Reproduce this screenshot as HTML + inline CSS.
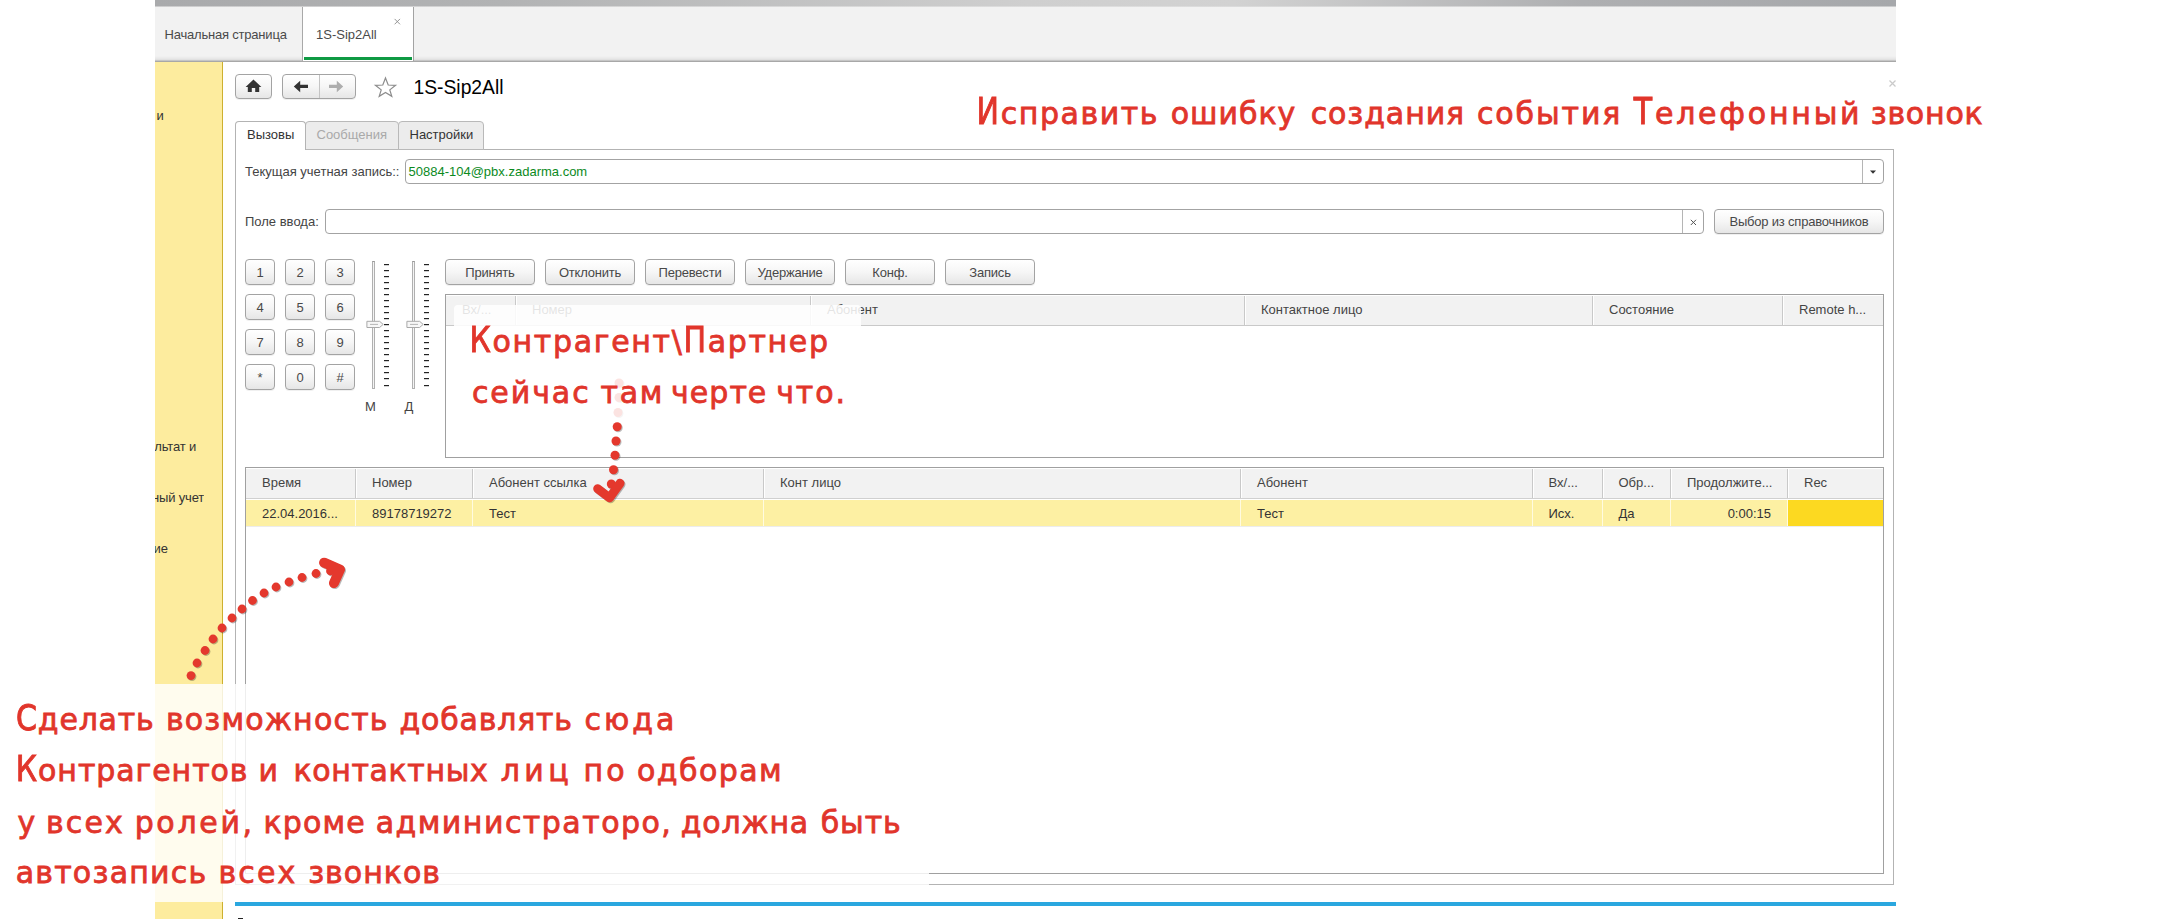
<!DOCTYPE html>
<html lang="ru"><head><meta charset="utf-8"><title>1S-Sip2All</title>
<style>
html,body{margin:0;padding:0;background:#fff;}
body{width:2183px;height:919px;overflow:hidden;position:relative;font-family:"Liberation Sans",sans-serif;font-size:13px;color:#444;}
.a{position:absolute;}
.t{position:absolute;white-space:nowrap;line-height:16px;font-size:13px;}
.btn{position:absolute;box-sizing:border-box;border:1px solid #a3a3a3;border-radius:4px;background:linear-gradient(#ffffff 0%,#f6f6f6 50%,#e6e6e6 100%);text-align:center;line-height:16px;font-size:13px;color:#484848;letter-spacing:-0.2px;box-shadow:0 1px 0 rgba(0,0,0,.06);}
.btn span{position:relative;display:block;}
.inp{position:absolute;box-sizing:border-box;border:1px solid #a3a3a3;border-radius:4px;background:#fff;}
.tbl{position:absolute;box-sizing:border-box;border:1px solid #a0a0a0;background:#fff;}
.hd{position:absolute;background:#f2f2f2;}
.vd{position:absolute;width:1px;background:#c9c9c9;box-shadow:1px 0 0 #fff;}
.red{position:absolute;white-space:nowrap;font-family:"DejaVu Sans","Liberation Sans",sans-serif;color:#e1352b;-webkit-text-stroke:0.8px #e1352b;font-size:30px;line-height:40px;}
.c{display:inline-block;transform:scaleY(1.2);transform-origin:50% 30.4px;}
.c2{transform:scaleY(1.25);}
</style></head><body>

<div class="a" style="left:155px;top:0;width:1741px;height:919px;background:#fff;"></div>
<div class="a" style="left:155px;top:0;width:1741px;height:7px;background:linear-gradient(90deg,#a9aaac 0%,#b2b3b4 20%,#cfcfcf 50%,#d2d2d2 62%,#aeafb1 82%,#a6a8ab 100%);"></div>
<div class="a" style="left:155px;top:6px;width:1741px;height:1px;background:linear-gradient(90deg,#cdcdce,#dedede 55%,#cacbcc);"></div>
<div class="a" style="left:155px;top:7px;width:1741px;height:53px;background:linear-gradient(#f2f2f2 0,#f2f2f2 49px,#e6e6e6 52px,#dcdcdc 53px);"></div>
<div class="a" style="left:155px;top:60px;width:1741px;height:2px;background:linear-gradient(#c6c6c6 0,#c6c6c6 50%,#a8a8a8 50%,#a8a8a8 100%);"></div>
<div class="a" style="left:302px;top:7px;width:112px;height:54px;background:#fff;border-left:1px solid #a9a9a9;border-right:1px solid #a3a3a3;box-sizing:border-box;"></div>
<div class="a" style="left:304px;top:57px;width:108px;height:3px;background:#0e9a43;"></div>
<div class="t" style="left:164.5px;top:27px;color:#4a4a4a;letter-spacing:-0.2px;">Начальная страница</div>
<div class="t" style="left:316px;top:27px;color:#4a4a4a;">1S-Sip2All</div>
<svg class="a" style="left:393px;top:17px" width="9" height="9" viewBox="0 0 9 9"><path d="M1.6 1.9 L7 7.3 M7 1.9 L1.6 7.3" stroke="#8a8a8a" stroke-width="0.9" fill="none"/></svg>
<div class="a" style="left:155px;top:62px;width:67px;height:857px;background:#fdec9e;"></div>
<div class="a" style="left:222px;top:62px;width:1px;height:857px;background:#cdb02f;"></div>
<div class="a" style="left:155px;top:107.5px;width:8.5px;height:16px;overflow:hidden;"><div class="t" style="right:0;top:0;color:#333;letter-spacing:-0.15px;">и</div></div>
<div class="a" style="left:155px;top:439.0px;width:41.19999999999999px;height:16px;overflow:hidden;"><div class="t" style="right:0;top:0;color:#333;letter-spacing:-0.15px;">ультат и</div></div>
<div class="a" style="left:155px;top:490.0px;width:49.19999999999999px;height:16px;overflow:hidden;"><div class="t" style="right:0;top:0;color:#333;letter-spacing:-0.15px;">нный учет</div></div>
<div class="a" style="left:155px;top:541.0px;width:12.800000000000011px;height:16px;overflow:hidden;"><div class="t" style="right:0;top:0;color:#333;letter-spacing:-0.15px;">ние</div></div>
<div class="btn" style="left:235px;top:74px;width:37px;height:25px;"></div>
<svg class="a" style="left:244px;top:78px" width="19" height="16" viewBox="244 78 19 16"><path d="M253.5 79.6 L261.4 87.1 L259.2 87.1 L259.2 92.1 L255.2 92.1 L255.2 88.1 L251.8 88.1 L251.8 92.1 L247.8 92.1 L247.8 87.1 L245.6 87.1 Z" fill="#333"/></svg>
<div class="btn" style="left:282px;top:74px;width:74px;height:25px;"></div>
<div class="a" style="left:319px;top:75px;width:1px;height:23px;background:#c4c4c4;"></div>
<svg class="a" style="left:290px;top:78px" width="58" height="17" viewBox="290 78 58 17"><path d="M293.8 86.4 L300.2 80.8 L300.2 84.8 L308 84.8 L308 88 L300.2 88 L300.2 92.2 Z" fill="#333"/><path d="M343.2 86.4 L336.8 80.8 L336.8 84.8 L329 84.8 L329 88 L336.8 88 L336.8 92.2 Z" fill="#adadad"/></svg>
<svg class="a" style="left:372px;top:75px" width="27" height="25" viewBox="372 75 27 25"><path d="M385.5 78 L388.2 85 L395.6 85.3 L389.8 89.9 L391.8 96.3 L385.5 92.5 L379.2 96.3 L381.2 89.9 L375.4 85.3 L382.8 85 Z" fill="#fff" stroke="#8c8c8c" stroke-width="1.2" stroke-linejoin="miter"/></svg>
<div class="t" style="left:413.5px;top:76px;font-size:19.3px;line-height:24px;color:#000;">1S-Sip2All</div>
<svg class="a" style="left:1888px;top:79px" width="9" height="9" viewBox="0 0 9 9"><path d="M1.5 1.5 L7.5 7.5 M7.5 1.5 L1.5 7.5" stroke="#cacaca" stroke-width="1.3" fill="none"/></svg>
<div class="a" style="left:235px;top:149px;width:1659px;height:736px;box-sizing:border-box;border:1px solid #b3b3b3;background:#fff;"></div>
<div class="a" style="left:305px;top:121px;width:94px;height:29px;box-sizing:border-box;border:1px solid #b9b9b9;border-radius:4px 4px 0 0;background:#ececec;"></div>
<div class="a" style="left:398px;top:121px;width:86px;height:29px;box-sizing:border-box;border:1px solid #b9b9b9;border-radius:4px 4px 0 0;background:#ececec;"></div>
<div class="a" style="left:235px;top:121px;width:71px;height:29px;box-sizing:border-box;border:1px solid #b3b3b3;border-bottom:none;border-radius:4px 4px 0 0;background:#fff;"></div><div class="a" style="left:236px;top:149px;width:69px;height:1px;background:#fff;"></div>
<div class="t" style="left:247px;top:127px;color:#333;">Вызовы</div>
<div class="t" style="left:316.5px;top:127px;color:#a9a9a9;">Сообщения</div>
<div class="t" style="left:409.5px;top:127px;color:#333;">Настройки</div>
<div class="t" style="left:245px;top:163.7px;">Текущая учетная запись::</div>
<div class="inp" style="left:405px;top:159px;width:1479px;height:25px;"></div>
<div class="a" style="left:1862px;top:160px;width:1px;height:23px;background:#b5b5b5;"></div>
<svg class="a" style="left:1868px;top:168px" width="10" height="8" viewBox="0 0 10 8"><path d="M2 2.6 L8 2.6 L5 5.8 Z" fill="#333"/></svg>
<div class="t" style="left:408.5px;top:163.7px;color:#0b8a1d;">50884-104@pbx.zadarma.com</div>
<div class="t" style="left:245px;top:213.7px;">Поле ввода:</div>
<div class="inp" style="left:325px;top:209px;width:1379px;height:25px;"></div>
<div class="a" style="left:1682px;top:210px;width:1px;height:23px;background:#b5b5b5;"></div>
<svg class="a" style="left:1689px;top:218px" width="9" height="9" viewBox="0 0 9 9"><path d="M1.8 1.8 L7 7 M7 1.8 L1.8 7" stroke="#555" stroke-width="1" fill="none"/></svg>
<div class="btn" style="left:1714px;top:209px;width:170px;height:25px;"><span style="top:3.5px">Выбор из справочников</span></div>
<div class="btn" style="left:245px;top:259px;width:30px;height:26px;"><span style="top:4.5px">1</span></div>
<div class="btn" style="left:285px;top:259px;width:30px;height:26px;"><span style="top:4.5px">2</span></div>
<div class="btn" style="left:325px;top:259px;width:30px;height:26px;"><span style="top:4.5px">3</span></div>
<div class="btn" style="left:245px;top:294px;width:30px;height:26px;"><span style="top:4.5px">4</span></div>
<div class="btn" style="left:285px;top:294px;width:30px;height:26px;"><span style="top:4.5px">5</span></div>
<div class="btn" style="left:325px;top:294px;width:30px;height:26px;"><span style="top:4.5px">6</span></div>
<div class="btn" style="left:245px;top:329px;width:30px;height:26px;"><span style="top:4.5px">7</span></div>
<div class="btn" style="left:285px;top:329px;width:30px;height:26px;"><span style="top:4.5px">8</span></div>
<div class="btn" style="left:325px;top:329px;width:30px;height:26px;"><span style="top:4.5px">9</span></div>
<div class="btn" style="left:245px;top:364px;width:30px;height:26px;"><span style="top:4.5px">*</span></div>
<div class="btn" style="left:285px;top:364px;width:30px;height:26px;"><span style="top:4.5px">0</span></div>
<div class="btn" style="left:325px;top:364px;width:30px;height:26px;"><span style="top:4.5px">#</span></div>
<div class="a" style="left:372px;top:261px;width:3px;height:128px;box-sizing:border-box;border:1px solid #b0b0b0;border-top-color:#9a9a9a;background:#f4f4f4;"></div>
<svg class="a" style="left:383.6px;top:261px" width="6" height="128" viewBox="0 0 6 128"><rect x="0" y="3" width="5" height="1.2" fill="#222"/><rect x="0" y="9" width="5" height="1.2" fill="#222"/><rect x="0" y="15" width="5" height="1.2" fill="#222"/><rect x="0" y="21" width="5" height="1.2" fill="#222"/><rect x="0" y="27" width="5" height="1.2" fill="#222"/><rect x="0" y="33" width="5" height="1.2" fill="#222"/><rect x="0" y="39" width="5" height="1.2" fill="#222"/><rect x="0" y="45" width="5" height="1.2" fill="#222"/><rect x="0" y="51" width="5" height="1.2" fill="#222"/><rect x="0" y="57" width="5" height="1.2" fill="#222"/><rect x="0" y="63" width="5" height="1.2" fill="#222"/><rect x="0" y="69" width="5" height="1.2" fill="#222"/><rect x="0" y="75" width="5" height="1.2" fill="#222"/><rect x="0" y="81" width="5" height="1.2" fill="#222"/><rect x="0" y="87" width="5" height="1.2" fill="#222"/><rect x="0" y="93" width="5" height="1.2" fill="#222"/><rect x="0" y="99" width="5" height="1.2" fill="#222"/><rect x="0" y="105" width="5" height="1.2" fill="#222"/><rect x="0" y="111" width="5" height="1.2" fill="#222"/><rect x="0" y="117" width="5" height="1.2" fill="#222"/><rect x="0" y="124" width="5" height="1.2" fill="#222"/></svg>
<svg class="a" style="left:365.8px;top:320px" width="19" height="9" viewBox="0 0 19 9"><path d="M0.9 1.3 L13.6 1.3 L17.2 4.4 L13.6 7.5 L0.9 7.5 Z" fill="#f7f7f7" stroke="#a9a9a9" stroke-width="1"/><path d="M4 4.4 L12 4.4" stroke="#b5b5b5" stroke-width="1"/></svg>
<div class="a" style="left:412px;top:261px;width:3px;height:128px;box-sizing:border-box;border:1px solid #b0b0b0;border-top-color:#9a9a9a;background:#f4f4f4;"></div>
<svg class="a" style="left:423.6px;top:261px" width="6" height="128" viewBox="0 0 6 128"><rect x="0" y="3" width="5" height="1.2" fill="#222"/><rect x="0" y="9" width="5" height="1.2" fill="#222"/><rect x="0" y="15" width="5" height="1.2" fill="#222"/><rect x="0" y="21" width="5" height="1.2" fill="#222"/><rect x="0" y="27" width="5" height="1.2" fill="#222"/><rect x="0" y="33" width="5" height="1.2" fill="#222"/><rect x="0" y="39" width="5" height="1.2" fill="#222"/><rect x="0" y="45" width="5" height="1.2" fill="#222"/><rect x="0" y="51" width="5" height="1.2" fill="#222"/><rect x="0" y="57" width="5" height="1.2" fill="#222"/><rect x="0" y="63" width="5" height="1.2" fill="#222"/><rect x="0" y="69" width="5" height="1.2" fill="#222"/><rect x="0" y="75" width="5" height="1.2" fill="#222"/><rect x="0" y="81" width="5" height="1.2" fill="#222"/><rect x="0" y="87" width="5" height="1.2" fill="#222"/><rect x="0" y="93" width="5" height="1.2" fill="#222"/><rect x="0" y="99" width="5" height="1.2" fill="#222"/><rect x="0" y="105" width="5" height="1.2" fill="#222"/><rect x="0" y="111" width="5" height="1.2" fill="#222"/><rect x="0" y="117" width="5" height="1.2" fill="#222"/><rect x="0" y="124" width="5" height="1.2" fill="#222"/></svg>
<svg class="a" style="left:405.8px;top:320px" width="19" height="9" viewBox="0 0 19 9"><path d="M0.9 1.3 L13.6 1.3 L17.2 4.4 L13.6 7.5 L0.9 7.5 Z" fill="#f7f7f7" stroke="#a9a9a9" stroke-width="1"/><path d="M4 4.4 L12 4.4" stroke="#b5b5b5" stroke-width="1"/></svg>
<div class="t" style="left:365px;top:399px;">М</div>
<div class="t" style="left:404.5px;top:399px;">Д</div>
<div class="btn" style="left:445px;top:259px;width:90px;height:26px;"><span style="top:4.5px">Принять</span></div>
<div class="btn" style="left:545px;top:259px;width:90px;height:26px;"><span style="top:4.5px">Отклонить</span></div>
<div class="btn" style="left:645px;top:259px;width:90px;height:26px;"><span style="top:4.5px">Перевести</span></div>
<div class="btn" style="left:745px;top:259px;width:90px;height:26px;"><span style="top:4.5px">Удержание</span></div>
<div class="btn" style="left:845px;top:259px;width:90px;height:26px;"><span style="top:4.5px">Конф.</span></div>
<div class="btn" style="left:945px;top:259px;width:90px;height:26px;"><span style="top:4.5px">Запись</span></div>
<div class="tbl" style="left:445px;top:294px;width:1439px;height:164px;"></div>
<div class="hd" style="left:446px;top:296px;width:1437px;height:29px;"></div>
<div class="a" style="left:446px;top:325px;width:1437px;height:1px;background:#c9c9c9;"></div>
<div class="vd" style="left:515px;top:296px;height:29px;"></div>
<div class="vd" style="left:810px;top:296px;height:29px;"></div>
<div class="vd" style="left:1244px;top:296px;height:29px;"></div>
<div class="vd" style="left:1592px;top:296px;height:29px;"></div>
<div class="vd" style="left:1782px;top:296px;height:29px;"></div>
<div class="t" style="left:462px;top:301.6px;">Вх/...</div>
<div class="t" style="left:532px;top:301.6px;">Номер</div>
<div class="t" style="left:827px;top:301.6px;">Абонент</div>
<div class="t" style="left:1261px;top:301.6px;">Контактное лицо</div>
<div class="t" style="left:1609px;top:301.6px;">Состояние</div>
<div class="t" style="left:1799px;top:301.6px;">Remote h...</div>
<div class="tbl" style="left:245px;top:467px;width:1639px;height:407px;"></div>
<div class="hd" style="left:246px;top:469px;width:1637px;height:29px;"></div>
<div class="a" style="left:246px;top:498px;width:1637px;height:1px;background:#d0d0d0;"></div>
<div class="a" style="left:246px;top:500px;width:1637px;height:26px;background:#fdf0a3;"></div>
<div class="a" style="left:246px;top:526px;width:1637px;height:1px;background:#ececec;"></div>
<div class="a" style="left:1788px;top:500px;width:95px;height:26px;background:#fcd921;"></div>
<div class="vd" style="left:355px;top:469px;height:29px;"></div>
<div class="a" style="left:355px;top:500px;width:1px;height:26px;background:#fffbe0;"></div>
<div class="vd" style="left:472px;top:469px;height:29px;"></div>
<div class="a" style="left:472px;top:500px;width:1px;height:26px;background:#fffbe0;"></div>
<div class="vd" style="left:763px;top:469px;height:29px;"></div>
<div class="a" style="left:763px;top:500px;width:1px;height:26px;background:#fffbe0;"></div>
<div class="vd" style="left:1240px;top:469px;height:29px;"></div>
<div class="a" style="left:1240px;top:500px;width:1px;height:26px;background:#fffbe0;"></div>
<div class="vd" style="left:1532px;top:469px;height:29px;"></div>
<div class="a" style="left:1532px;top:500px;width:1px;height:26px;background:#fffbe0;"></div>
<div class="vd" style="left:1602px;top:469px;height:29px;"></div>
<div class="a" style="left:1602px;top:500px;width:1px;height:26px;background:#fffbe0;"></div>
<div class="vd" style="left:1670px;top:469px;height:29px;"></div>
<div class="a" style="left:1670px;top:500px;width:1px;height:26px;background:#fffbe0;"></div>
<div class="vd" style="left:1787px;top:469px;height:29px;"></div>
<div class="a" style="left:1787px;top:500px;width:1px;height:26px;background:#fffbe0;"></div>
<div class="t" style="left:262px;top:474.5px;">Время</div>
<div class="t" style="left:372px;top:474.5px;">Номер</div>
<div class="t" style="left:489px;top:474.5px;">Абонент ссылка</div>
<div class="t" style="left:780px;top:474.5px;">Конт лицо</div>
<div class="t" style="left:1257px;top:474.5px;">Абонент</div>
<div class="t" style="left:1548.5px;top:474.5px;">Вх/...</div>
<div class="t" style="left:1618.5px;top:474.5px;">Обр...</div>
<div class="t" style="left:1687px;top:474.5px;">Продолжите...</div>
<div class="t" style="left:1804px;top:474.5px;">Rec</div>
<div class="t" style="left:262px;top:505.5px;color:#333;">22.04.2016...</div>
<div class="t" style="left:372px;top:505.5px;color:#333;">89178719272</div>
<div class="t" style="left:489px;top:505.5px;color:#333;">Тест</div>
<div class="t" style="left:1257px;top:505.5px;color:#333;">Тест</div>
<div class="t" style="left:1548.5px;top:505.5px;color:#333;">Исх.</div>
<div class="t" style="left:1618.5px;top:505.5px;color:#333;">Да</div>
<div class="t" style="left:1671px;width:100px;text-align:right;top:505.5px;color:#333;">0:00:15</div>
<div class="a" style="left:235px;top:901.5px;width:1661px;height:4.3px;background:#2aa7df;"></div>
<div class="a" style="left:238px;top:918px;width:5px;height:1px;background:#222;"></div>
<svg class="a" style="left:0;top:0;filter:drop-shadow(1px 1.3px 0.6px rgba(0,0,0,.27));" width="2183" height="919" viewBox="0 0 2183 919" fill="#e4382d"><circle cx="619" cy="383" r="4.5"/><circle cx="619" cy="397.5" r="4.5"/><circle cx="618" cy="412.5" r="4.5"/><circle cx="617.2" cy="426.7" r="4.5"/><circle cx="616" cy="441" r="4.5"/><circle cx="615" cy="455.3" r="4.5"/><circle cx="613.5" cy="469.8" r="4.5"/><circle cx="611.3" cy="484" r="4.5"/><path d="M597.7 488.7 L609.5 497.8 L620 483.3" fill="none" stroke="#e4382d" stroke-width="9" stroke-linecap="round" stroke-linejoin="round"/></svg>
<div class="a" style="left:454px;top:305px;width:407px;height:116px;border-radius:4px;background:rgba(255,255,255,.86);"></div>
<div class="a" style="left:0;top:684px;width:929px;height:217.7px;background:rgba(255,255,255,.82);"></div>
<svg class="a" style="left:0;top:0;filter:drop-shadow(1px 1.3px 0.6px rgba(0,0,0,.27));" width="2183" height="919" viewBox="0 0 2183 919" fill="#e4382d"><circle cx="191" cy="675.6" r="4.4"/><circle cx="197" cy="663" r="4.4"/><circle cx="205" cy="650.5" r="4.4"/><circle cx="213" cy="639" r="4.4"/><circle cx="222" cy="628" r="4.4"/><circle cx="232" cy="618" r="4.4"/><circle cx="242" cy="609" r="4.4"/><circle cx="252.5" cy="600.5" r="4.4"/><circle cx="264" cy="593" r="4.4"/><circle cx="276" cy="587" r="4.4"/><circle cx="289" cy="582" r="4.4"/><circle cx="302" cy="577.5" r="4.4"/><circle cx="316" cy="573.5" r="4.4"/><circle cx="330.5" cy="571" r="4.4"/><path d="M324.1 562.7 L340 569.5 L334 583.1" fill="none" stroke="#e4382d" stroke-width="10" stroke-linecap="round" stroke-linejoin="round"/></svg>
<span class="red" style="left:976.60px;top:93.60px;letter-spacing:1.58px;"><span class="c c2">И</span>справить</span>
<span class="red" style="left:1170.65px;top:93.60px;letter-spacing:1.01px;">ошибку</span>
<span class="red" style="left:1310.65px;top:93.60px;letter-spacing:0.92px;">создания</span>
<span class="red" style="left:1476.90px;top:93.60px;letter-spacing:1.91px;">события</span>
<span class="red" style="left:1633.85px;top:93.60px;letter-spacing:2.77px;"><span class="c c2">Т</span>елефонный</span>
<span class="red" style="left:1870.65px;top:93.60px;letter-spacing:0.80px;">звонок</span>
<span class="red" style="left:469.60px;top:321.60px;letter-spacing:1.66px;"><span class="c">К</span>онтрагент\<span class="c">П</span>артнер</span>
<span class="red" style="left:471.90px;top:373.30px;letter-spacing:1.95px;">сейчас</span>
<span class="red" style="left:600.60px;top:373.30px;letter-spacing:1.67px;">там</span>
<span class="red" style="left:671.10px;top:373.30px;letter-spacing:1.02px;">черте</span>
<span class="red" style="left:776.20px;top:373.30px;letter-spacing:1.92px;">что.</span>
<span class="red" style="left:16.10px;top:700.10px;letter-spacing:0.80px;"><span class="c">С</span>делать</span>
<span class="red" style="left:165.90px;top:700.10px;letter-spacing:1.20px;">возможность</span>
<span class="red" style="left:399.40px;top:700.10px;letter-spacing:0.82px;">добавлять</span>
<span class="red" style="left:584.40px;top:700.10px;letter-spacing:3.07px;">сюда</span>
<span class="red" style="left:15.85px;top:751.10px;letter-spacing:0.92px;"><span class="c">К</span>онтрагентов</span>
<span class="red" style="left:258.40px;top:751.10px;letter-spacing:0.00px;">и</span>
<span class="red" style="left:293.40px;top:751.10px;letter-spacing:0.65px;">контактных</span>
<span class="red" style="left:500.65px;top:751.10px;letter-spacing:4.51px;">лиц</span>
<span class="red" style="left:583.40px;top:751.10px;letter-spacing:3.34px;">по</span>
<span class="red" style="left:636.90px;top:751.10px;letter-spacing:1.47px;">одборам</span>
<span class="red" style="left:17.50px;top:802.60px;letter-spacing:0.00px;">у</span>
<span class="red" style="left:45.90px;top:802.60px;letter-spacing:2.19px;">всех</span>
<span class="red" style="left:134.65px;top:802.60px;letter-spacing:2.68px;">ролей,</span>
<span class="red" style="left:263.40px;top:802.60px;letter-spacing:1.20px;">кроме</span>
<span class="red" style="left:375.65px;top:802.60px;letter-spacing:1.48px;">администраторо,</span>
<span class="red" style="left:680.65px;top:802.60px;letter-spacing:0.86px;">должна</span>
<span class="red" style="left:820.65px;top:802.60px;letter-spacing:0.93px;">быть</span>
<span class="red" style="left:15.65px;top:853.10px;letter-spacing:1.23px;">автозапись</span>
<span class="red" style="left:218.40px;top:853.10px;letter-spacing:2.19px;">всех</span>
<span class="red" style="left:308.15px;top:853.10px;letter-spacing:1.02px;">звонков</span>
</body></html>
